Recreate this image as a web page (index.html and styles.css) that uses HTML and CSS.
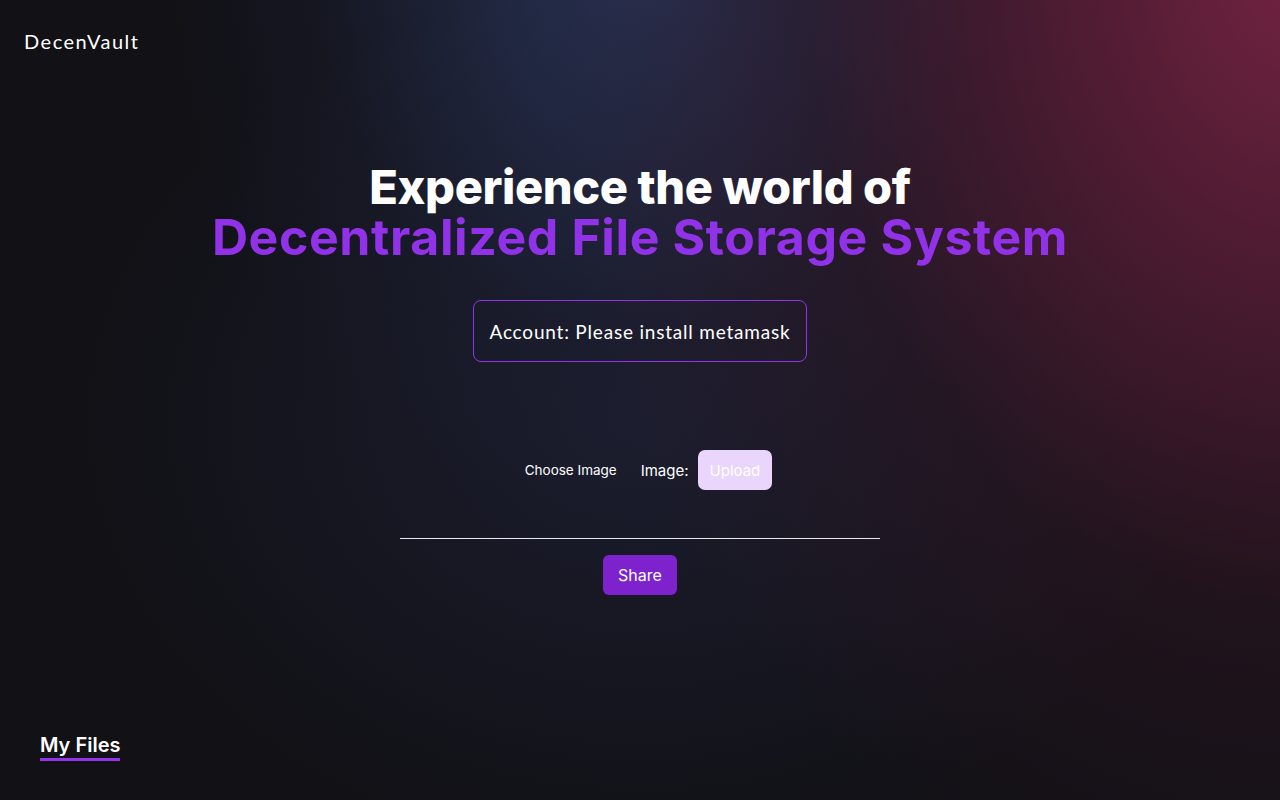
FILE: index.html
```html
<!DOCTYPE html>
<html lang="en">
<head>
<meta charset="utf-8">
<title>DecenVault</title>
<link rel="stylesheet" href="styles.css">
</head>
<body>
<div class="page">
  <header class="nav">
    <div class="brand">DecenVault</div>
  </header>
  <main class="hero">
    <h1 class="title">
      <span class="title-top">Experience the world of</span>
      <span class="title-bottom">Decentralized File Storage System</span>
    </h1>
    <div class="account">Account: Please install metamask</div>
    <form class="upload">
      <span class="choose">Choose Image</span>
      <span class="image-label">Image:</span>
      <button type="button" class="upload-btn">Upload</button>
    </form>
    <div class="share-area">
      <div class="share-line"></div>
      <button type="button" class="share-btn">Share</button>
    </div>
  </main>
  <section class="files">
    <h2 class="files-title">My Files</h2>
  </section>
</div>
</body>
</html>
```
FILE: styles.css
```css
* { box-sizing: border-box; }
html, body { margin: 0; padding: 0; }
body {
  width: 1280px;
  height: 800px;
  overflow: hidden;
  font-family: "Lato", "Inter", sans-serif;
  color: #fff;
  background-color: #111116;
  background-image:
    radial-gradient(ellipse 760px 1000px at 1300px -40px, rgba(120,36,68,0.95) 0%, rgba(95,30,58,0.7) 35%, rgba(55,22,38,0.4) 65%, rgba(17,17,22,0) 100%),
    radial-gradient(ellipse 480px 560px at 650px -40px, rgba(38,50,84,1) 0%, rgba(36,44,74,0.75) 35%, rgba(28,32,52,0.35) 70%, rgba(17,17,22,0) 100%),
    radial-gradient(ellipse 560px 440px at 640px 420px, rgba(32,34,56,0.7) 0%, rgba(17,17,22,0) 100%);
}
.page {
  height: 800px;
  display: flex;
  flex-direction: column;
}
.nav {
  padding: 29px 24px 0;
  height: 80px;
}
.brand {
  font-family: "Lato", sans-serif;
  font-size: 20px;
  font-weight: 400;
  letter-spacing: 1.5px;
}
.hero {
  display: flex;
  flex-direction: column;
  align-items: center;
}
.title {
  margin: 83px 0 0;
  display: flex;
  flex-direction: column;
  align-items: center;
}
.title-top {
  font-family: "Inter", sans-serif;
  font-weight: 800;
  font-size: 47px;
  line-height: 48px;
  letter-spacing: -0.4px;
  color: #fff;
}
.title-bottom {
  font-family: "Inter", sans-serif;
  font-weight: 700;
  font-size: 50px;
  line-height: 52px;
  letter-spacing: 0.6px;
  color: #9131e8;
}
.account {
  margin-top: 37px;
  height: 62px;
  padding: 0 16px;
  display: flex;
  align-items: center;
  border: 1px solid #9333ea;
  border-radius: 8px;
  font-family: "Lato", sans-serif;
  font-size: 19px;
  letter-spacing: 0.8px;
}
.upload {
  margin-top: 88px;
  padding-left: 17px;
  display: flex;
  align-items: center;
  font-family: "Inter", sans-serif;
}
.choose {
  font-size: 13.5px;
  margin-right: 24px;
}
.image-label {
  font-size: 15px;
  margin-right: 9px;
}
.upload-btn {
  height: 40px;
  padding: 0 12px;
  border: none;
  border-radius: 7px;
  background: #ead6fd;
  color: #fff;
  font-family: "Inter", sans-serif;
  font-size: 15px;
}
.share-area {
  margin-top: 48px;
  width: 480px;
  display: flex;
  flex-direction: column;
  align-items: center;
}
.share-line {
  width: 480px;
  height: 1px;
  background: #e8e8ee;
}
.share-btn {
  margin-top: 16px;
  height: 40px;
  padding: 0 15px 1px;
  border: none;
  border-radius: 6px;
  background: #7e22ce;
  color: #fff;
  font-family: "Inter", sans-serif;
  font-size: 16px;
}
.files {
  margin-top: auto;
  padding: 0 40px 39px;
}
.files-title {
  margin: 0;
  display: inline-block;
  font-family: "Inter", sans-serif;
  font-size: 20px;
  font-weight: 600;
  line-height: 24px;
  padding-bottom: 1px;
  border-bottom: 3px solid #9333ea;
}
```
